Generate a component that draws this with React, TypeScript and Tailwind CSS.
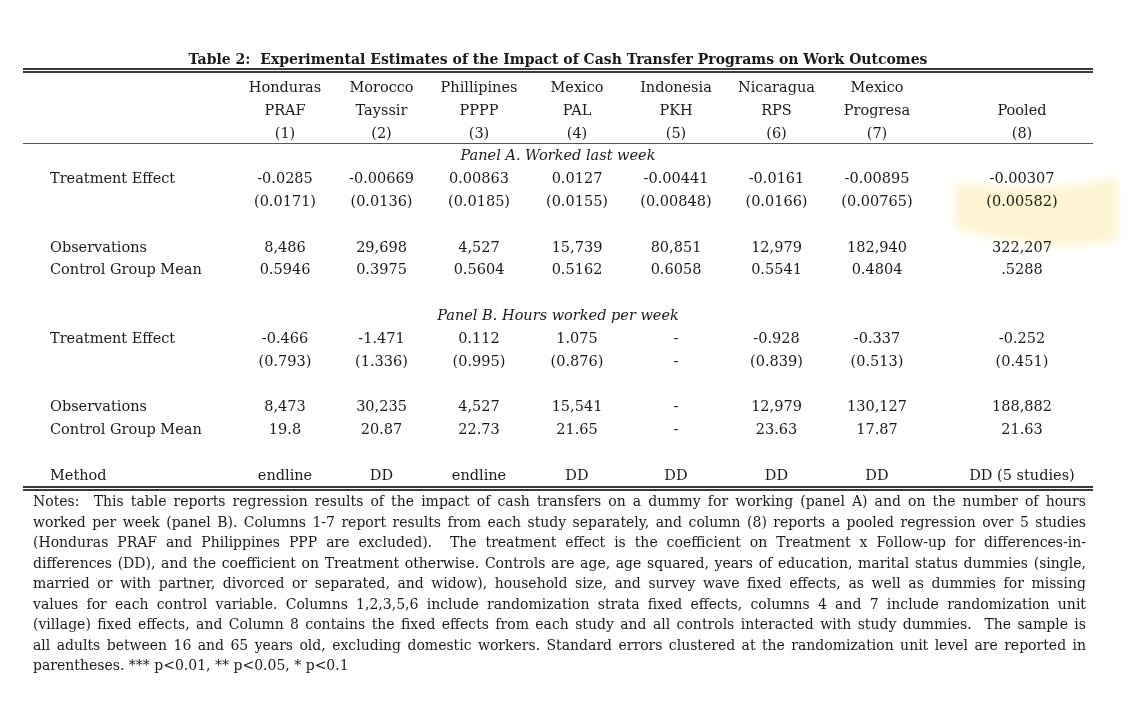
const cols =
  "grid grid-cols-[214px_96px_97px_98px_98px_100px_101px_100px_166px] h-[22.8px] leading-[22.8px]";

function Row({ label, cells, className = "" }: { label?: string; cells: string[]; className?: string }) {
  return (
    <div className={`${cols} ${className}`}>
      <div className="pl-[27px] whitespace-nowrap">{label}</div>
      {cells.map((c, i) => (
        <div key={i} className={`text-center whitespace-nowrap ${i === 7 ? "pl-[24px]" : ""}`}>
          {c}
        </div>
      ))}
    </div>
  );
}

function Spacer() {
  return <div className="h-[22.8px]" />;
}

function PanelTitle({ children }: { children: string }) {
  return <div className="h-[22.8px] leading-[22.8px] text-center italic">{children}</div>;
}

const notes = [
  "Notes:  This table reports regression results of the impact of cash transfers on a dummy for working (panel A) and on the number of hours",
  "worked per week (panel B). Columns 1-7 report results from each study separately, and column (8) reports a pooled regression over 5 studies",
  "(Honduras PRAF and Philippines PPP are excluded).  The treatment effect is the coefficient on Treatment x Follow-up for differences-in-",
  "differences (DD), and the coefficient on Treatment otherwise. Controls are age, age squared, years of education, marital status dummies (single,",
  "married or with partner, divorced or separated, and widow), household size, and survey wave fixed effects, as well as dummies for missing",
  "values for each control variable. Columns 1,2,3,5,6 include randomization strata fixed effects, columns 4 and 7 include randomization unit",
  "(village) fixed effects, and Column 8 contains the fixed effects from each study and all controls interacted with study dummies.  The sample is",
  "all adults between 16 and 65 years old, excluding domestic workers. Standard errors clustered at the randomization unit level are reported in",
];

export default function App() {
  return (
    <div className="min-h-screen bg-white text-[#1a1a1a] font-['DejaVu_Serif',serif] text-[14.5px]">
      <div className="relative pt-[50px] pl-[23px] w-[1093px]">
        <h1 className="text-center font-bold text-[14px] leading-[18px]">
          Table 2:&nbsp; Experimental Estimates of the Impact of Cash Transfer Programs on Work Outcomes
        </h1>
        <div className="h-[5px] border-y-2 border-[#3a3a3a]" />

        <div className="mt-[3px]">
          <Row cells={["Honduras", "Morocco", "Phillipines", "Mexico", "Indonesia", "Nicaragua", "Mexico", ""]} />
          <Row cells={["PRAF", "Tayssir", "PPPP", "PAL", "PKH", "RPS", "Progresa", "Pooled"]} />
          <Row
            cells={["(1)", "(2)", "(3)", "(4)", "(5)", "(6)", "(7)", "(8)"]}
            className="border-b border-[#555]"
          />

          <PanelTitle>Panel A. Worked last week</PanelTitle>
          <Row
            label="Treatment Effect"
            cells={["-0.0285", "-0.00669", "0.00863", "0.0127", "-0.00441", "-0.0161", "-0.00895", "-0.00307"]}
          />
          <Row cells={["(0.0171)", "(0.0136)", "(0.0185)", "(0.0155)", "(0.00848)", "(0.0166)", "(0.00765)", "(0.00582)"]} />
          <Spacer />
          <Row
            label="Observations"
            cells={["8,486", "29,698", "4,527", "15,739", "80,851", "12,979", "182,940", "322,207"]}
          />
          <Row
            label="Control Group Mean"
            cells={["0.5946", "0.3975", "0.5604", "0.5162", "0.6058", "0.5541", "0.4804", ".5288"]}
          />
          <Spacer />

          <PanelTitle>Panel B. Hours worked per week</PanelTitle>
          <Row
            label="Treatment Effect"
            cells={["-0.466", "-1.471", "0.112", "1.075", "-", "-0.928", "-0.337", "-0.252"]}
          />
          <Row cells={["(0.793)", "(1.336)", "(0.995)", "(0.876)", "-", "(0.839)", "(0.513)", "(0.451)"]} />
          <Spacer />
          <Row
            label="Observations"
            cells={["8,473", "30,235", "4,527", "15,541", "-", "12,979", "130,127", "188,882"]}
          />
          <Row
            label="Control Group Mean"
            cells={["19.8", "20.87", "22.73", "21.65", "-", "23.63", "17.87", "21.63"]}
          />
          <Spacer />
          <Row label="Method" cells={["endline", "DD", "endline", "DD", "DD", "DD", "DD", "DD (5 studies)"]} />
        </div>

        <div className="h-[5px] border-y-2 border-[#3a3a3a]" />

        <div className="pl-[10px] pr-[7px] text-[14px] leading-[20.5px]">
          {notes.map((line, i) => (
            <div key={i} className="text-justify [text-align-last:justify] whitespace-pre-wrap">
              {line}
            </div>
          ))}
          <div>parentheses. *** p&lt;0.01, ** p&lt;0.05, * p&lt;0.1</div>
        </div>

        {/* highlighter mark over the pooled estimate */}
        <svg
          className="absolute left-[927px] top-[168px] w-[198px] h-[92px] pointer-events-none mix-blend-multiply"
          viewBox="0 0 198 92"
        >
          <defs>
            <filter id="hl" x="-20%" y="-20%" width="140%" height="140%">
              <feGaussianBlur stdDeviation="4" />
            </filter>
          </defs>
          <path
            d="M29 14 Q 115 28 190 9 L 190 72 Q 125 86 29 61 Z"
            fill="#fdf3cc"
            opacity="0.9"
            filter="url(#hl)"
          />
        </svg>
      </div>
    </div>
  );
}
